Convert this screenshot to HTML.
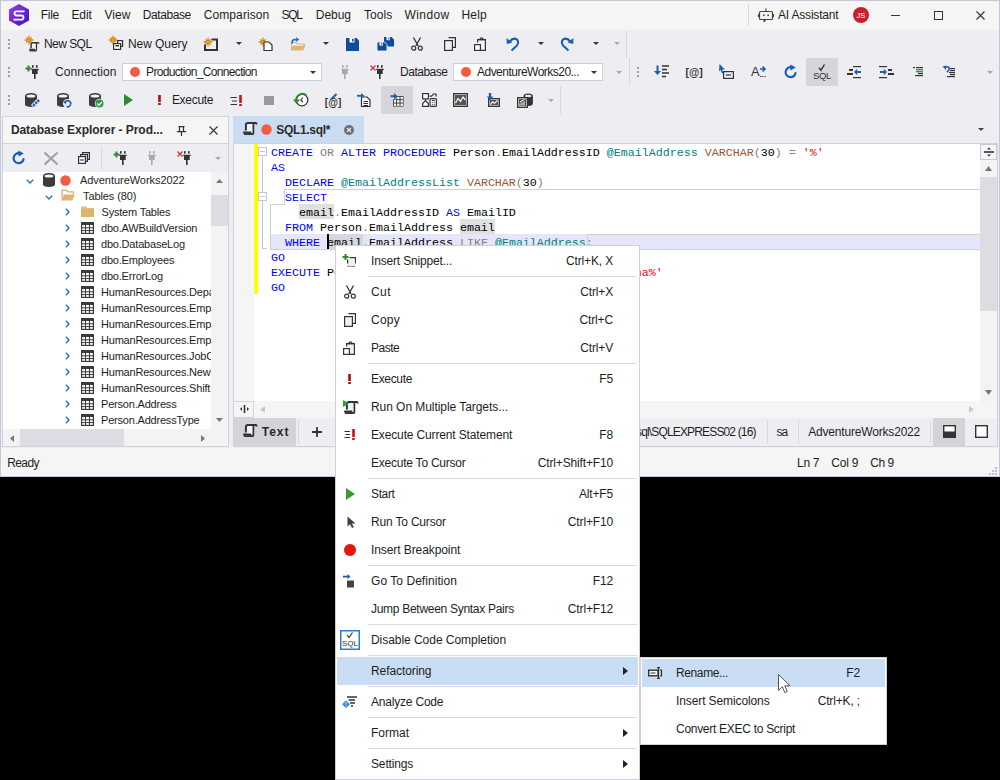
<!DOCTYPE html>
<html><head><meta charset="utf-8"><style>
*{margin:0;padding:0;box-sizing:border-box}
html,body{width:1000px;height:780px;overflow:hidden;background:#000}
body{position:relative;font-family:"Liberation Sans",sans-serif;font-size:12px;color:#1e1e1e}
.a{position:absolute}
.t{position:absolute;white-space:nowrap;font-size:12px;line-height:14px;color:#1e1e1e;letter-spacing:-0.15px}
.b{font-weight:bold;color:#2a2a2a}
svg{position:absolute;overflow:visible}
.code{position:absolute;white-space:pre;font-family:"Liberation Mono",monospace;font-size:11.667px;line-height:15px;color:#000}
.kw{color:#0000ff}.gr{color:#808080}.tl{color:#008080}.br{color:#a0522d}.rd{color:#ff0000}
</style></head><body>
<div class="a" style="left:0px;top:0px;width:1000px;height:477px;background:#eeeef2;"></div>
<div class="a" style="left:0px;top:0px;width:1000px;height:1px;background:#c6c6d8;"></div>
<div class="a" style="left:0px;top:0px;width:1px;height:477px;background:#c6c6d8;"></div>
<div class="a" style="left:999px;top:0px;width:1px;height:477px;background:#c6c6d8;"></div>
<div class="a" style="left:1px;top:1px;width:998px;height:29px;background:#f5f5f5;"></div>
<div class="a" style="left:1px;top:448px;width:998px;height:28px;background:#f5f5f5;"></div>
<div class="a" style="left:0px;top:476px;width:1000px;height:1px;background:#c6c6d8;"></div>
<svg style="left:9px;top:4px" width="20" height="22" viewBox="0 0 20 22"><defs><linearGradient id="lg" x1="0" y1="0" x2="1" y2="1"><stop offset="0" stop-color="#9b3fe0"/><stop offset="1" stop-color="#3a10c0"/></linearGradient></defs><path d="M10 0 L20 5.5 L20 16.5 L10 22 L0 16.5 L0 5.5Z" fill="url(#lg)"/><path d="M15.5 7.3 H7.6 a2.1 2.1 0 0 0 0 4.2 H12.4 a2.1 2.1 0 0 1 0 4.2 H4.5" fill="none" stroke="#fff" stroke-width="1.8"/></svg>
<div class="t " style="left:40.75px;top:8px;letter-spacing:-0.279px;">File</div>
<div class="t " style="left:71.5px;top:8px;letter-spacing:-0.143px;">Edit</div>
<div class="t " style="left:104.5px;top:8px;letter-spacing:0.069px;">View</div>
<div class="t " style="left:142.75px;top:8px;letter-spacing:-0.41px;">Database</div>
<div class="t " style="left:203.75px;top:8px;letter-spacing:0.09px;">Comparison</div>
<div class="t " style="left:281.5px;top:8px;letter-spacing:-1.256px;">SQL</div>
<div class="t " style="left:315.75px;top:8px;letter-spacing:-0.028px;">Debug</div>
<div class="t " style="left:364.0px;top:8px;letter-spacing:0.059px;">Tools</div>
<div class="t " style="left:404.5px;top:8px;letter-spacing:0.414px;">Window</div>
<div class="t " style="left:461.5px;top:8px;letter-spacing:0.19px;">Help</div>
<div class="a" style="left:748px;top:4px;width:1px;height:22px;background:#d8d8e0;"></div>
<svg style="left:758px;top:8px" width="16" height="14" viewBox="0 0 16 14"><rect x="1.5" y="3.5" width="13" height="8" rx="1" fill="none" stroke="#444" stroke-width="1.2"/><path d="M8 0.5v3 M0.5 6v3 M15.5 6v3" stroke="#444" stroke-width="1.2"/><rect x="5" y="6.5" width="1.6" height="1.6" fill="#444"/><rect x="9.4" y="6.5" width="1.6" height="1.6" fill="#444"/><path d="M6 11.5v2.5l2-2.5" fill="#444" stroke="#444"/></svg>
<div class="t " style="left:778.0px;top:8px;letter-spacing:-0.187px;">AI Assistant</div>
<svg style="left:853px;top:7px" width="16" height="16" viewBox="0 0 16 16"><circle cx="8" cy="8" r="8" fill="#c8202a"/><text x="8" y="11" font-family="Liberation Sans" font-size="7.5" fill="#fff" text-anchor="middle">JS</text></svg>
<div class="a" style="left:891px;top:15px;width:9px;height:1px;background:#333;"></div>
<div class="a" style="left:934px;top:11px;width:9px;height:9px;background:transparent;border:1px solid #333"></div>
<svg style="left:976px;top:11px" width="9" height="9" viewBox="0 0 9 9"><path d="M0.5 0.5 L8.5 8.5 M8.5 0.5 L0.5 8.5" stroke="#333" stroke-width="1.1"/></svg>
<div class="a" style="left:8px;top:39px;width:2px;height:2px;background:#a0a0aa;"></div>
<div class="a" style="left:8px;top:43px;width:2px;height:2px;background:#a0a0aa;"></div>
<div class="a" style="left:8px;top:47px;width:2px;height:2px;background:#a0a0aa;"></div>
<div class="a" style="left:8px;top:67px;width:2px;height:2px;background:#a0a0aa;"></div>
<div class="a" style="left:8px;top:71px;width:2px;height:2px;background:#a0a0aa;"></div>
<div class="a" style="left:8px;top:75px;width:2px;height:2px;background:#a0a0aa;"></div>
<div class="a" style="left:8px;top:95px;width:2px;height:2px;background:#a0a0aa;"></div>
<div class="a" style="left:8px;top:99px;width:2px;height:2px;background:#a0a0aa;"></div>
<div class="a" style="left:8px;top:103px;width:2px;height:2px;background:#a0a0aa;"></div>
<div class="a" style="left:637px;top:67px;width:2px;height:2px;background:#a0a0aa;"></div>
<div class="a" style="left:637px;top:71px;width:2px;height:2px;background:#a0a0aa;"></div>
<div class="a" style="left:637px;top:75px;width:2px;height:2px;background:#a0a0aa;"></div>
<div class="t " style="left:43.9px;top:37px;letter-spacing:-0.525px;">New SQL</div>
<div class="t " style="left:127.9px;top:37px;letter-spacing:-0.052px;">New Query</div>
<svg style="left:236px;top:42px" width="6" height="3" viewBox="0 0 6 3"><path d="M0 0H6L3 3Z" fill="#333"/></svg>
<svg style="left:323px;top:42px" width="6" height="3" viewBox="0 0 6 3"><path d="M0 0H6L3 3Z" fill="#333"/></svg>
<svg style="left:538px;top:42px" width="6" height="3" viewBox="0 0 6 3"><path d="M0 0H6L3 3Z" fill="#333"/></svg>
<svg style="left:593px;top:42px" width="6" height="3" viewBox="0 0 6 3"><path d="M0 0H6L3 3Z" fill="#333"/></svg>
<svg style="left:614px;top:42px" width="6" height="3" viewBox="0 0 6 3"><path d="M0 0H6L3 3Z" fill="#a8a8b0"/></svg>
<div class="a" style="left:626px;top:30px;width:1px;height:28px;background:#d8d8e0;"></div>
<div class="t " style="left:55.1px;top:65px;letter-spacing:0.077px;">Connection</div>
<div class="a" style="left:122px;top:63px;width:200px;height:18px;background:#fff;border:1px solid #cccfdb"></div>
<svg style="left:130px;top:67px" width="10" height="10" viewBox="0 0 10 10"><circle cx="5" cy="5" r="5" fill="#f25a42"/></svg>
<div class="t " style="left:146.1px;top:65px;letter-spacing:-0.668px;">Production_Connection</div>
<svg style="left:310px;top:71px" width="6" height="3" viewBox="0 0 6 3"><path d="M0 0H6L3 3Z" fill="#333"/></svg>
<div class="t " style="left:400.0px;top:65px;letter-spacing:-0.481px;">Database</div>
<div class="a" style="left:453px;top:63px;width:150px;height:18px;background:#fff;border:1px solid #cccfdb"></div>
<svg style="left:461px;top:67px" width="10" height="10" viewBox="0 0 10 10"><circle cx="5" cy="5" r="5" fill="#f25a42"/></svg>
<div class="t " style="left:477.0px;top:65px;letter-spacing:-0.518px;">AdventureWorks20...</div>
<svg style="left:591px;top:71px" width="6" height="3" viewBox="0 0 6 3"><path d="M0 0H6L3 3Z" fill="#333"/></svg>
<svg style="left:616px;top:71px" width="6" height="3" viewBox="0 0 6 3"><path d="M0 0H6L3 3Z" fill="#a8a8b0"/></svg>
<div class="a" style="left:629px;top:58px;width:1px;height:28px;background:#d8d8e0;"></div>
<div class="a" style="left:806px;top:58px;width:32px;height:28px;background:#d6d6da;"></div>
<svg style="left:987px;top:71px" width="6" height="3" viewBox="0 0 6 3"><path d="M0 0H6L3 3Z" fill="#a8a8b0"/></svg>
<div class="t " style="left:171.9px;top:93px;letter-spacing:-0.293px;">Execute</div>
<div class="a" style="left:381px;top:86px;width:32px;height:28px;background:#d6d6da;"></div>
<svg style="left:548px;top:99px" width="6" height="3" viewBox="0 0 6 3"><path d="M0 0H6L3 3Z" fill="#a8a8b0"/></svg>
<div class="a" style="left:560px;top:86px;width:1px;height:28px;background:#d8d8e0;"></div>
<div class="a" style="left:2px;top:116px;width:227px;height:331px;background:#d0d2de;"></div>
<div class="a" style="left:3px;top:117px;width:225px;height:26px;background:#f5f5f5;"></div>
<div class="a" style="left:3px;top:144px;width:225px;height:28px;background:#eeeef2;"></div>
<div class="a" style="left:3px;top:172px;width:225px;height:274px;background:#fff;"></div>
<div class="t b" style="left:10.9px;top:123px;letter-spacing:-0.057px;">Database Explorer - Prod...</div>
<div class="a" style="left:101px;top:146px;width:1px;height:24px;background:#d8d8e0;"></div>
<svg style="left:215px;top:157px" width="6" height="3" viewBox="0 0 6 3"><path d="M0 0H6L3 3Z" fill="#a8a8b0"/></svg>
<div class="a" style="left:211px;top:172px;width:17px;height:257px;background:#f3f3f3;"></div>
<div class="a" style="left:211px;top:195px;width:17px;height:31px;background:#dcdce2;"></div>
<div class="a" style="left:3px;top:429px;width:208px;height:17px;background:#f3f3f3;"></div>
<div class="a" style="left:20px;top:429px;width:104px;height:17px;background:#dcdce2;"></div>
<div class="a" style="left:211px;top:429px;width:17px;height:17px;background:#f3f3f3;"></div>
<div class="t " style="left:80px;top:173px;letter-spacing:-0.05px;font-size:11px;">AdventureWorks2022</div>
<div class="t " style="left:83px;top:189px;letter-spacing:-0.1px;font-size:11px;">Tables (80)</div>
<div class="t " style="left:101.5px;top:205px;letter-spacing:-0.2px;font-size:11px;">System Tables</div>
<div class="t" style="left:101px;top:221px;width:110px;overflow:hidden;letter-spacing:-0.2px;font-size:11px">dbo.AWBuildVersion</div>
<div class="t" style="left:101px;top:237px;width:110px;overflow:hidden;letter-spacing:-0.2px;font-size:11px">dbo.DatabaseLog</div>
<div class="t" style="left:101px;top:253px;width:110px;overflow:hidden;letter-spacing:-0.2px;font-size:11px">dbo.Employees</div>
<div class="t" style="left:101px;top:269px;width:110px;overflow:hidden;letter-spacing:-0.2px;font-size:11px">dbo.ErrorLog</div>
<div class="t" style="left:101px;top:285px;width:110px;overflow:hidden;letter-spacing:-0.2px;font-size:11px">HumanResources.Department</div>
<div class="t" style="left:101px;top:301px;width:110px;overflow:hidden;letter-spacing:-0.2px;font-size:11px">HumanResources.Employee</div>
<div class="t" style="left:101px;top:317px;width:110px;overflow:hidden;letter-spacing:-0.2px;font-size:11px">HumanResources.EmployeeDepartmentHistory</div>
<div class="t" style="left:101px;top:333px;width:110px;overflow:hidden;letter-spacing:-0.2px;font-size:11px">HumanResources.EmployeePayHistory</div>
<div class="t" style="left:101px;top:349px;width:110px;overflow:hidden;letter-spacing:-0.2px;font-size:11px">HumanResources.JobCandidate</div>
<div class="t" style="left:101px;top:365px;width:110px;overflow:hidden;letter-spacing:-0.2px;font-size:11px">HumanResources.NewHire</div>
<div class="t" style="left:101px;top:381px;width:110px;overflow:hidden;letter-spacing:-0.2px;font-size:11px">HumanResources.Shift</div>
<div class="t" style="left:101px;top:397px;width:110px;overflow:hidden;letter-spacing:-0.2px;font-size:11px">Person.Address</div>
<div class="t" style="left:101px;top:413px;width:110px;overflow:hidden;letter-spacing:-0.2px;font-size:11px">Person.AddressType</div>
<div class="a" style="left:233px;top:116px;width:131px;height:28px;background:#c9dcf2;"></div>
<div class="t b" style="left:276.2px;top:123px;letter-spacing:-0.298px;">SQL1.sql*</div>
<div class="a" style="left:233px;top:143px;width:765px;height:304px;background:#d0d2de;"></div>
<div class="a" style="left:234px;top:144px;width:763px;height:257px;background:#fff;"></div>
<div class="a" style="left:234px;top:144px;width:20px;height:257px;background:#f5f5f5;"></div>
<div class="a" style="left:254px;top:144px;width:4px;height:150px;background:#ffff00;"></div>
<div class="a" style="left:980px;top:144px;width:17px;height:257px;background:#f3f3f3;"></div>
<div class="a" style="left:980px;top:177px;width:17px;height:134px;background:#dcdce2;"></div>
<div class="a" style="left:980px;top:144px;width:17px;height:16px;background:#f5f5f5;border:1px solid #c8cad8"></div>
<div class="a" style="left:234px;top:401px;width:763px;height:17px;background:#f5f5f5;"></div>
<div class="a" style="left:234px;top:401px;width:20px;height:17px;background:#f5f5f5;border:1px solid #d0d2de;border-left:none"></div>
<div class="a" style="left:234px;top:418px;width:763px;height:28px;background:#eeeef2;"></div>
<div class="a" style="left:234px;top:418px;width:62px;height:28px;background:#d4d4d8;"></div>
<div class="t b" style="left:261.7px;top:425px;letter-spacing:1.006px;">Text</div>
<div class="a" style="left:298px;top:420px;width:1px;height:24px;background:#d8d8e0;"></div>
<div class="t " style="left:636.0px;top:425px;letter-spacing:-0.845px;">sql\SQLEXPRESS02 (16)</div>
<div class="a" style="left:767px;top:420px;width:1px;height:24px;background:#d8d8e0;"></div>
<div class="t " style="left:776.5px;top:425px;letter-spacing:-1.074px;">sa</div>
<div class="a" style="left:798px;top:420px;width:1px;height:24px;background:#d8d8e0;"></div>
<div class="t " style="left:808.2px;top:425px;letter-spacing:-0.181px;">AdventureWorks2022</div>
<div class="a" style="left:930px;top:420px;width:1px;height:24px;background:#d8d8e0;"></div>
<div class="a" style="left:933px;top:418px;width:32px;height:28px;background:#d4d4d8;"></div>
<div class="t " style="left:7.2px;top:456px;letter-spacing:-0.597px;">Ready</div>
<div class="t " style="left:797.1px;top:456px;letter-spacing:-0.318px;">Ln 7</div>
<div class="t " style="left:831.3px;top:456px;letter-spacing:-0.203px;">Col 9</div>
<div class="t " style="left:870.3px;top:456px;letter-spacing:-0.516px;">Ch 9</div>
<svg style="left:25px;top:36px" width="8" height="8" viewBox="0 0 8 8"><path d="M5.60 4.00L7.90 4.00M5.13 5.13L6.26 6.26M4.00 5.60L4.00 7.90M2.87 5.13L1.74 6.26M2.40 4.00L0.10 4.00M2.87 2.87L1.74 1.74M4.00 2.40L4.00 0.10M5.13 2.87L6.26 1.74" stroke="#d4860b" stroke-width="1.3" stroke-linecap="round"/><circle cx="4" cy="4" r="1.3" fill="none" stroke="#d4860b" stroke-width="1"/></svg>
<svg style="left:29px;top:42px" width="10.08" height="9.36" viewBox="0 0 14 13"><rect x="3.5" y="2" width="6.5" height="8.5" fill="#f2f2f2"/><path d="M2.9 8.6V3.2Q2.9 1.1 5 1.1H12.8Q13.6 1.1 13.6 2.4" stroke="#333333" stroke-width="2" fill="none"/><path d="M10.4 1.5V11.2Q10.4 12.2 9.4 12.2H1" stroke="#333333" stroke-width="1.7" fill="none"/><path d="M0.2 10.6H7.2Q7.6 11.6 8.5 11.8" stroke="#333333" stroke-width="2.2" fill="none"/></svg>
<svg style="left:109px;top:36px" width="8" height="8" viewBox="0 0 8 8"><path d="M5.60 4.00L7.90 4.00M5.13 5.13L6.26 6.26M4.00 5.60L4.00 7.90M2.87 5.13L1.74 6.26M2.40 4.00L0.10 4.00M2.87 2.87L1.74 1.74M4.00 2.40L4.00 0.10M5.13 2.87L6.26 1.74" stroke="#d4860b" stroke-width="1.3" stroke-linecap="round"/><circle cx="4" cy="4" r="1.3" fill="none" stroke="#d4860b" stroke-width="1"/></svg>
<svg style="left:113px;top:40px" width="10" height="10" viewBox="0 0 10 10"><rect x="4.6" y="0.6" width="5" height="5.8" fill="none" stroke="#333333" stroke-width="1.2"/><rect x="0.6" y="3.6" width="7" height="5.8" fill="#fff" stroke="#333333" stroke-width="1.2"/><rect x="2.5" y="5" width="3.5" height="1.5" fill="#333333"/></svg>
<svg style="left:204px;top:38px" width="8" height="8" viewBox="0 0 8 8"><path d="M5.60 4.00L7.90 4.00M5.13 5.13L6.26 6.26M4.00 5.60L4.00 7.90M2.87 5.13L1.74 6.26M2.40 4.00L0.10 4.00M2.87 2.87L1.74 1.74M4.00 2.40L4.00 0.10M5.13 2.87L6.26 1.74" stroke="#d4860b" stroke-width="1.3" stroke-linecap="round"/><circle cx="4" cy="4" r="1.3" fill="none" stroke="#d4860b" stroke-width="1"/></svg>
<svg style="left:204px;top:38px" width="14" height="13" viewBox="0 0 14 13"><path d="M7.5 1.5H13V12H1V6.5" stroke="#333333" stroke-width="2" fill="none"/></svg>
<svg style="left:259px;top:38px" width="8" height="8" viewBox="0 0 8 8"><path d="M5.60 4.00L7.90 4.00M5.13 5.13L6.26 6.26M4.00 5.60L4.00 7.90M2.87 5.13L1.74 6.26M2.40 4.00L0.10 4.00M2.87 2.87L1.74 1.74M4.00 2.40L4.00 0.10M5.13 2.87L6.26 1.74" stroke="#d4860b" stroke-width="1.3" stroke-linecap="round"/><circle cx="4" cy="4" r="1.3" fill="none" stroke="#d4860b" stroke-width="1"/></svg>
<svg style="left:263px;top:41px" width="10" height="10" viewBox="0 0 10 10"><path d="M1 1H6L9 4V9.5H1Z" fill="#fff" stroke="#333333" stroke-width="1.2"/></svg>
<svg style="left:290px;top:37px" width="16" height="14" viewBox="0 0 16 14"><path d="M1.6 13V5.6H5.8L7.2 7H14.2V9" fill="#fff" stroke="#d6b274" stroke-width="1.2"/><path d="M0.5 13.5L2.8 8.5H15.5L13.2 13.5Z" fill="#dcb676"/><path d="M2.2 6.5Q1.6 2.6 5 2.6H6.5" stroke="#1a6ad0" stroke-width="1.6" fill="none"/><path d="M6.2 0.2L9.2 2.6L6.2 5Z" fill="#1a6ad0"/></svg>
<svg style="left:346px;top:38px" width="13" height="13" viewBox="0 0 13 13"><path d="M0 0H10.5L13 2.5V13H0Z" fill="#0e4c9a"/><rect x="3.5" y="0" width="5" height="4.5" fill="#fff"/><rect x="6" y="0.8" width="1.6" height="2.6" fill="#0e4c9a"/></svg>
<svg style="left:377px;top:37px" width="17" height="14" viewBox="0 0 17 14"><path d="M7 0H14.5L17 2.5V9.5H7Z" fill="#0e4c9a"/><rect x="9.5" y="0" width="3.5" height="3.2" fill="#fff"/><rect x="11.3" y="0.6" width="1" height="2" fill="#0e4c9a"/><path d="M0 5H7.5L10 7.5V14H0Z" fill="#0e4c9a" stroke="#eeeef2" stroke-width="0.9"/><rect x="2.5" y="5.4" width="3.5" height="3.2" fill="#fff"/><rect x="4.3" y="6" width="1" height="2" fill="#0e4c9a"/></svg>
<svg style="left:411px;top:37px" width="12" height="14" viewBox="0 0 12 14"><path d="M2.5 0.5L7.2 9M9.5 0.5L4.8 9" stroke="#333333" stroke-width="1.3" fill="none"/><circle cx="2.7" cy="11.2" r="2" fill="none" stroke="#333333" stroke-width="1.2"/><circle cx="9.3" cy="11.2" r="2" fill="none" stroke="#333333" stroke-width="1.2"/></svg>
<svg style="left:444px;top:37px" width="12" height="14" viewBox="0 0 12 14"><path d="M4.5 0.6H11.4V10.4H9" stroke="#333333" stroke-width="1.2" fill="none"/><rect x="0.6" y="3.6" width="7.8" height="9.8" fill="#f0f0f0" stroke="#333333" stroke-width="1.2"/></svg>
<svg style="left:474px;top:37px" width="13" height="14" viewBox="0 0 13 14"><path d="M3.6 5.5V2.6H11.4V13.4H7" stroke="#333333" stroke-width="1.2" fill="#f0f0f0"/><path d="M5.5 2.6 Q7.5 -0.8 9.5 2.6Z" fill="none" stroke="#333333" stroke-width="1.1"/><rect x="0.6" y="7.6" width="5.8" height="5.8" fill="#fff" stroke="#333333" stroke-width="1.2"/></svg>
<svg style="left:505px;top:36px" width="15" height="15" viewBox="0 0 15 15"><path d="M4.5 5.5Q8.5 1 12 3.5Q14.5 6.5 11.5 10L6.5 14.5" stroke="#1a5fb4" stroke-width="2" fill="none"/><path d="M1.5 2L1.8 8L7.5 6.5Z" fill="#1a5fb4"/></svg>
<svg style="left:560px;top:36px" width="15" height="15" viewBox="0 0 15 15"><g transform="translate(15 0) scale(-1 1)"><path d="M4.5 5.5Q8.5 1 12 3.5Q14.5 6.5 11.5 10L6.5 14.5" stroke="#1a5fb4" stroke-width="2" fill="none"/><path d="M1.5 2L1.8 8L7.5 6.5Z" fill="#1a5fb4"/></g></svg>
<svg style="left:25px;top:65px" width="7" height="7" viewBox="0 0 7 7"><path d="M3.5 0.5V6.5M0.5 3.5H6.5" stroke="#2e8b2e" stroke-width="2"/></svg>
<svg style="left:31px;top:65px" width="8" height="14" viewBox="0 0 8 14"><rect x="1" y="0" width="1.6" height="2.8" rx="0.6" fill="#333333"/><rect x="5" y="0" width="1.6" height="2.8" rx="0.6" fill="#333333"/><rect x="0.2" y="3.8" width="7.6" height="1.2" fill="#333333"/><rect x="1" y="4.8" width="5.7" height="4.2" fill="#333333"/><rect x="3" y="8.8" width="1.6" height="5.2" fill="#333333"/></svg>
<svg style="left:341px;top:65px" width="8" height="14" viewBox="0 0 8 14"><rect x="1" y="0" width="1.6" height="2.8" rx="0.6" fill="#a8a8ae"/><rect x="5" y="0" width="1.6" height="2.8" rx="0.6" fill="#a8a8ae"/><rect x="0.2" y="3.8" width="7.6" height="1.2" fill="#a8a8ae"/><rect x="1" y="4.8" width="5.7" height="4.2" fill="#a8a8ae"/><rect x="3" y="8.8" width="1.6" height="5.2" fill="#a8a8ae"/></svg>
<svg style="left:370px;top:65px" width="6" height="6" viewBox="0 0 6 6"><path d="M0.5 0.5L5.5 5.5M5.5 0.5L0.5 5.5" stroke="#c83232" stroke-width="1.2"/></svg>
<svg style="left:376px;top:65px" width="8" height="14" viewBox="0 0 8 14"><rect x="1" y="0" width="1.6" height="2.8" rx="0.6" fill="#333333"/><rect x="5" y="0" width="1.6" height="2.8" rx="0.6" fill="#333333"/><rect x="0.2" y="3.8" width="7.6" height="1.2" fill="#333333"/><rect x="1" y="4.8" width="5.7" height="4.2" fill="#333333"/><rect x="3" y="8.8" width="1.6" height="5.2" fill="#333333"/></svg>
<svg style="left:654px;top:65px" width="15" height="13" viewBox="0 0 15 13"><path d="M8 1H15M8 4.5H13M8 8H15M8 11.5H12" stroke="#333333" stroke-width="1.6"/><path d="M3.5 0.5V7" stroke="#1a5fb4" stroke-width="2"/><path d="M0 6H7L3.5 10Z" fill="#1a5fb4"/></svg>
<svg style="left:686px;top:65px" width="16" height="13" viewBox="0 0 16 13"><text x="8" y="11" font-family="Liberation Sans" font-size="10.5" font-weight="bold" fill="#333333" text-anchor="middle">[@]</text></svg>
<svg style="left:719px;top:64px" width="15" height="15" viewBox="0 0 15 15"><path d="M0.5 0L6 5.5H3L4.5 9L3 9.5L1.5 6L0 7.5Z" fill="#1a5fb4"/><rect x="4.6" y="7.6" width="9.8" height="6.8" fill="none" stroke="#333333" stroke-width="1.2"/><path d="M7 11H12" stroke="#333333" stroke-width="1.2"/></svg>
<svg style="left:751px;top:65px" width="15" height="13" viewBox="0 0 15 13"><text x="0" y="11" font-family="Liberation Sans" font-size="13" fill="#333333">A</text><path d="M9 4H14M11.5 1.5L14 4L11.5 6.5" stroke="#1a5fb4" stroke-width="1.6" fill="none"/><path d="M9 11.5h1.2M11.2 11.5h1.2M13.4 11.5h1.2" stroke="#333333" stroke-width="1.2"/></svg>
<svg style="left:784px;top:65px" width="14" height="14" viewBox="0 0 14 14"><path d="M11.6 7.2 A5 5 0 1 1 7.6 2.3" stroke="#1a5fb4" stroke-width="2.2" fill="none"/><path d="M6.4 -0.6L11.8 2.5L6.4 5.6Z" fill="#1a5fb4"/></svg>
<svg style="left:814px;top:64px" width="16" height="15" viewBox="0 0 16 15"><path d="M5 3.8L7 6.2L10.5 0.5" stroke="#333333" stroke-width="1.4" fill="none"/><text x="8" y="14.8" font-family="Liberation Sans" font-size="9.5" fill="#333333" text-anchor="middle" letter-spacing="-0.3">SQL</text></svg>
<svg style="left:847px;top:65px" width="15" height="14" viewBox="0 0 15 14"><rect x="6" y="1" width="8" height="1.2" fill="#333333"/><rect x="2" y="4" width="4" height="2" fill="#333333"/><rect x="0" y="8" width="6" height="2" fill="#333333"/><rect x="6" y="12" width="8" height="1.2" fill="#333333"/><path d="M7 7L10.2 3.8V6H14V8H10.2V10.2Z" fill="#1a5fb4"/></svg>
<svg style="left:879px;top:65px" width="15" height="14" viewBox="0 0 15 14"><rect x="0" y="1" width="8" height="1.2" fill="#333333"/><rect x="9" y="4" width="4" height="2" fill="#333333"/><rect x="9" y="8" width="6" height="2" fill="#333333"/><rect x="0" y="12" width="8" height="1.2" fill="#333333"/><path d="M8 7L4.8 3.8V6H1V8H4.8V10.2Z" fill="#1a5fb4"/></svg>
<svg style="left:913px;top:66px" width="11" height="11" viewBox="0 0 11 11"><rect x="0" y="1" width="2" height="1.2" fill="#333333"/><rect x="3" y="1" width="7" height="1.2" fill="#333333"/><rect x="3" y="3" width="7" height="1.4" fill="#3a9a3a"/><rect x="3" y="5" width="7" height="1.4" fill="#3a9a3a"/><rect x="5" y="7" width="5" height="1.2" fill="#333333"/><rect x="2" y="9" width="8" height="1.2" fill="#333333"/></svg>
<svg style="left:942px;top:65px" width="14" height="13" viewBox="0 0 14 13"><path d="M3 2.5Q7.5 0.5 7.2 4.2Q6.8 6 4.8 7" stroke="#1a5fb4" stroke-width="1.6" fill="none"/><path d="M0.5 1.5L4 0.5V5Z" fill="#1a5fb4"/><rect x="8" y="3" width="5" height="1.2" fill="#333333"/><rect x="8" y="5" width="5" height="1.2" fill="#333333"/><rect x="7" y="7" width="6" height="1.2" fill="#333333"/><rect x="8" y="9" width="5" height="1.2" fill="#333333"/><rect x="5" y="11" width="8" height="1.2" fill="#333333"/></svg>
<svg style="left:25px;top:93px" width="12" height="14" viewBox="0 0 12 14"><path d="M0 2.8 A6.0 2.8 0 0 1 12 2.8 V11.5 A6.0 2.5 0 0 1 0 11.5Z" fill="#3c3c3c"/><ellipse cx="6.0" cy="2.9" rx="4.4" ry="1.5" fill="#f4f4f4"/></svg>
<svg style="left:31px;top:99px" width="9" height="9" viewBox="0 0 9 9"><path d="M8 1L1.5 7.5" stroke="#eeeef2" stroke-width="4.5"/><path d="M8 1L1.5 7.5" stroke="#1a5fb4" stroke-width="2.6" stroke-dasharray="2.2 0.8"/></svg>
<svg style="left:57px;top:93px" width="12" height="14" viewBox="0 0 12 14"><path d="M0 2.8 A6.0 2.8 0 0 1 12 2.8 V11.5 A6.0 2.5 0 0 1 0 11.5Z" fill="#3c3c3c"/><ellipse cx="6.0" cy="2.9" rx="4.4" ry="1.5" fill="#f4f4f4"/></svg>
<svg style="left:63px;top:99px" width="9" height="9" viewBox="0 0 9 9"><circle cx="4.5" cy="4.5" r="4.5" fill="#eeeef2"/><path d="M2 3.5 A3 3 0 1 1 3.5 7.5" stroke="#1a5fb4" stroke-width="1.5" fill="none"/><path d="M0 2L3.6 2.2L2.5 5.5Z" fill="#1a5fb4"/></svg>
<svg style="left:89px;top:93px" width="12" height="14" viewBox="0 0 12 14"><path d="M0 2.8 A6.0 2.8 0 0 1 12 2.8 V11.5 A6.0 2.5 0 0 1 0 11.5Z" fill="#3c3c3c"/><ellipse cx="6.0" cy="2.9" rx="4.4" ry="1.5" fill="#f4f4f4"/></svg>
<svg style="left:95px;top:99px" width="9" height="9" viewBox="0 0 9 9"><circle cx="4.5" cy="4.5" r="4.7" fill="#eeeef2"/><circle cx="4.5" cy="4.5" r="4" fill="#2e9a3e"/><path d="M2.3 4.5L4 6.2L6.8 3" stroke="#fff" stroke-width="1.3" fill="none"/></svg>
<svg style="left:124px;top:94px" width="9" height="12" viewBox="0 0 9 12"><path d="M0 0L9 6L0 12Z" fill="#2e8b2e"/></svg>
<svg style="left:158px;top:95px" width="3" height="10" viewBox="0 0 3 10"><rect x="0.2" y="0" width="2.6" height="7" fill="#a01010"/><rect x="0.2" y="8" width="2.6" height="2" fill="#a01010"/></svg>
<svg style="left:230px;top:96px" width="13" height="10" viewBox="0 0 13 10"><path d="M0.5 1.5H7M2 5H7M0.5 8.5H7" stroke="#333333" stroke-width="1"/></svg>
<svg style="left:239px;top:95px" width="3" height="11" viewBox="0 0 3 11"><rect x="0.2" y="0" width="2.6" height="8" fill="#c01818"/><rect x="0.2" y="9" width="2.6" height="2" fill="#c01818"/></svg>
<div class="a" style="left:264px;top:96px;width:10px;height:9px;background:#9a9a9a;"></div>
<svg style="left:293px;top:93px" width="16" height="14" viewBox="0 0 16 14"><circle cx="9" cy="7" r="5.8" fill="#fff" stroke="#333333" stroke-width="1.2"/><path d="M10 4.5L7.8 7L10 9" stroke="#333333" stroke-width="1.1" fill="none"/><path d="M3.5 8 A6 6 0 0 1 13.5 2.5" stroke="#2e8b2e" stroke-width="2" fill="none"/><path d="M0 6.5H7L3.5 11Z" fill="#2e8b2e"/></svg>
<svg style="left:325px;top:93px" width="16" height="14" viewBox="0 0 16 14"><path d="M6 6.5L11.5 1" stroke="#1a5fb4" stroke-width="2.2"/><text x="8" y="13" font-family="Liberation Sans" font-size="10" font-weight="bold" fill="#333333" text-anchor="middle">[@]</text></svg>
<svg style="left:357px;top:93px" width="14" height="14" viewBox="0 0 14 14"><path d="M4.5 4H10L13 7V13.5H4.5Z" fill="#fff" stroke="#333333" stroke-width="1.2"/><path d="M6.5 8.5H11M6.5 10.5H11M6.5 12.5H11" stroke="#333333" stroke-width="1"/><path d="M0 2.8H5" stroke="#1a5fb4" stroke-width="1.8"/><path d="M4 0L7.5 2.8L4 5.6Z" fill="#1a5fb4"/></svg>
<svg style="left:390px;top:93px" width="14" height="14" viewBox="0 0 14 14"><path d="M6.5 3H13.5V13.5H3V6.5H6.5Z" fill="#333333"/><rect x="3.80" y="7.15" width="2.4" height="2.4" fill="#fff"/><rect x="3.80" y="10.50" width="2.4" height="2.4" fill="#fff"/><rect x="7.15" y="3.80" width="2.4" height="2.4" fill="#fff"/><rect x="7.15" y="7.15" width="2.4" height="2.4" fill="#fff"/><rect x="7.15" y="10.50" width="2.4" height="2.4" fill="#fff"/><rect x="10.50" y="3.80" width="2.4" height="2.4" fill="#fff"/><rect x="10.50" y="7.15" width="2.4" height="2.4" fill="#fff"/><rect x="10.50" y="10.50" width="2.4" height="2.4" fill="#fff"/><path d="M0.5 3.2H5" stroke="#1a5fb4" stroke-width="2"/><path d="M4 0L7.5 3.2L4 6.4Z" fill="#1a5fb4"/></svg>
<svg style="left:421px;top:93px" width="16" height="14" viewBox="0 0 16 14"><rect x="1.6" y="0.6" width="5.8" height="5.3" fill="#fff" stroke="#333333" stroke-width="1.2"/><path d="M8.5 3.2H10.5L12.5 1H15V3.5" stroke="#333333" stroke-width="1.2" fill="none"/><path d="M4.5 6V7.5M1.6 13.4V10.5L4.5 7.5L7.4 10.5V13.4Z" fill="#fff" stroke="#333333" stroke-width="1.2"/><rect x="9.1" y="5.6" width="6.3" height="7.8" rx="1" fill="#fff" stroke="#333333" stroke-width="1.2"/><path d="M10.8 7.5H13.8" stroke="#333333" stroke-width="1"/><path d="M10.8 9.6h1M12.8 9.6h1M10.8 11.6h1M12.8 11.6h1" stroke="#333333" stroke-width="1"/></svg>
<svg style="left:453px;top:93px" width="15" height="14" viewBox="0 0 15 14"><rect x="0.7" y="0.7" width="13.6" height="12.6" fill="#fff" stroke="#333333" stroke-width="1.4"/><rect x="2" y="2" width="11" height="10" fill="#555"/><path d="M2.5 10L5 5.5L7.5 8.5L10 4L12.5 7" stroke="#fff" stroke-width="1.2" fill="none"/></svg>
<svg style="left:485px;top:93px" width="15" height="14" viewBox="0 0 15 14"><rect x="3.7" y="5.7" width="10.6" height="7.6" fill="#fff" stroke="#333333" stroke-width="1.4"/><rect x="5" y="7" width="8" height="5" fill="#555"/><path d="M5.5 11.5L7.5 8.8L9.5 10.3L12.5 7.5" stroke="#fff" stroke-width="1.1" fill="none"/><path d="M5 0V4.5" stroke="#1a5fb4" stroke-width="2.4"/><path d="M1.8 3.5H8.2L5 7.5Z" fill="#1a5fb4"/></svg>
<svg style="left:517px;top:93px" width="16" height="14" viewBox="0 0 16 14"><path d="M6.5 3 A4.7 2.5 0 0 1 15.9 3 V10.5 A4.7 2.5 0 0 1 6.5 10.5Z" fill="#333333"/><ellipse cx="11.2" cy="3" rx="3.2" ry="1.2" fill="#e8e8e8"/><rect x="0.7" y="4.7" width="9.6" height="9.6" fill="#fff" stroke="#333333" stroke-width="1.4"/><rect x="2" y="6" width="7" height="7" fill="#555"/><path d="M3 12.5V10.5M5 12.5V9.5M7 12.5V8.5M3 9L7.5 6.5" stroke="#fff" stroke-width="1"/></svg>
<svg style="left:177px;top:126px" width="9" height="10" viewBox="0 0 9 10"><path d="M1.5 0.6H7.5M2.5 0.6V5.5M6.5 0.6V5.5M0 5.6H9M4.5 5.6V10" stroke="#333333" stroke-width="1.2" fill="none"/></svg>
<svg style="left:209px;top:126px" width="9" height="9" viewBox="0 0 9 9"><path d="M0.5 0.5L8.5 8.5M8.5 0.5L0.5 8.5" stroke="#333333" stroke-width="1.1"/></svg>
<svg style="left:12px;top:151px" width="14" height="14" viewBox="0 0 14 14"><path d="M11.6 7.2 A5 5 0 1 1 7.6 2.3" stroke="#1a5fb4" stroke-width="2.2" fill="none"/><path d="M6.4 -0.6L11.8 2.5L6.4 5.6Z" fill="#1a5fb4"/></svg>
<svg style="left:43px;top:151px" width="16" height="15" viewBox="0 0 16 15"><path d="M1.5 1.5L14.5 13.5M14.5 1.5L1.5 13.5" stroke="#a0a0a4" stroke-width="2"/></svg>
<svg style="left:78px;top:152px" width="12" height="12" viewBox="0 0 12 12"><path d="M4.5 2.6V0.6H11.4V7.4H9.5M2.6 4.6V2.6H9.4V9.4H7.5" stroke="#333333" stroke-width="1.2" fill="none"/><rect x="0.6" y="4.6" width="6.8" height="6.8" fill="#fff" stroke="#333333" stroke-width="1.2"/><path d="M2.2 8H5.8" stroke="#1a5fb4" stroke-width="1.4"/></svg>
<svg style="left:112.5px;top:150.5px" width="7" height="7" viewBox="0 0 7 7"><path d="M3.5 0.5V6.5M0.5 3.5H6.5" stroke="#2e8b2e" stroke-width="2"/></svg>
<svg style="left:119px;top:151px" width="8" height="14" viewBox="0 0 8 14"><rect x="1" y="0" width="1.6" height="2.8" rx="0.6" fill="#333333"/><rect x="5" y="0" width="1.6" height="2.8" rx="0.6" fill="#333333"/><rect x="0.2" y="3.8" width="7.6" height="1.2" fill="#333333"/><rect x="1" y="4.8" width="5.7" height="4.2" fill="#333333"/><rect x="3" y="8.8" width="1.6" height="5.2" fill="#333333"/></svg>
<svg style="left:148px;top:151px" width="8" height="14" viewBox="0 0 8 14"><rect x="1" y="0" width="1.6" height="2.8" rx="0.6" fill="#a8a8ae"/><rect x="5" y="0" width="1.6" height="2.8" rx="0.6" fill="#a8a8ae"/><rect x="0.2" y="3.8" width="7.6" height="1.2" fill="#a8a8ae"/><rect x="1" y="4.8" width="5.7" height="4.2" fill="#a8a8ae"/><rect x="3" y="8.8" width="1.6" height="5.2" fill="#a8a8ae"/></svg>
<svg style="left:177px;top:151px" width="6" height="6" viewBox="0 0 6 6"><path d="M0.5 0.5L5.5 5.5M5.5 0.5L0.5 5.5" stroke="#c83232" stroke-width="1.2"/></svg>
<svg style="left:183px;top:151px" width="8" height="14" viewBox="0 0 8 14"><rect x="1" y="0" width="1.6" height="2.8" rx="0.6" fill="#333333"/><rect x="5" y="0" width="1.6" height="2.8" rx="0.6" fill="#333333"/><rect x="0.2" y="3.8" width="7.6" height="1.2" fill="#333333"/><rect x="1" y="4.8" width="5.7" height="4.2" fill="#333333"/><rect x="3" y="8.8" width="1.6" height="5.2" fill="#333333"/></svg>
<svg style="left:26px;top:179px" width="8" height="5" viewBox="0 0 8 5"><path d="M0.8 0.8L4 4L7.2 0.8" stroke="#1e7ad6" stroke-width="1.5" fill="none"/></svg>
<svg style="left:43px;top:173px" width="12" height="14" viewBox="0 0 12 14"><path d="M0 2.8 A6.0 2.8 0 0 1 12 2.8 V11.5 A6.0 2.5 0 0 1 0 11.5Z" fill="#3c3c3c"/><ellipse cx="6.0" cy="2.9" rx="4.4" ry="1.5" fill="#f4f4f4"/></svg>
<svg style="left:60px;top:175px" width="11" height="11" viewBox="0 0 11 11"><circle cx="5.5" cy="5.5" r="5.2" fill="#f25a42"/></svg>
<svg style="left:45px;top:195px" width="8" height="5" viewBox="0 0 8 5"><path d="M0.8 0.8L4 4L7.2 0.8" stroke="#1e7ad6" stroke-width="1.5" fill="none"/></svg>
<svg style="left:61px;top:189px" width="14" height="12" viewBox="0 0 14 12"><path d="M1.2 11.3V1.2H5.5L7 2.8H12.3V5.5" fill="#fff" stroke="#d6b274" stroke-width="1.3"/><path d="M0.6 11.5L3 5.5H13.8L11.5 11.5Z" fill="#dcb676"/></svg>
<svg style="left:65px;top:208px" width="5" height="8" viewBox="0 0 5 8"><path d="M0.8 0.8L4 4L0.8 7.2" stroke="#1e7ad6" stroke-width="1.5" fill="none"/></svg>
<svg style="left:81px;top:205px" width="13" height="12" viewBox="0 0 13 12"><path d="M0 1.5H5L6.5 3H13V12H0Z" fill="#e3c07f"/><path d="M0 4H13V12H0Z" fill="#dcb56c"/></svg>
<svg style="left:65px;top:224px" width="5" height="8" viewBox="0 0 5 8"><path d="M0.8 0.8L4 4L0.8 7.2" stroke="#1e7ad6" stroke-width="1.5" fill="none"/></svg>
<svg style="left:81px;top:222px" width="13" height="12" viewBox="0 0 13 12"><rect x="0.6" y="0.6" width="11.8" height="10.8" fill="#fff" stroke="#3a3a3a" stroke-width="1.2"/><rect x="0" y="0" width="13" height="3" fill="#3a3a3a"/><path d="M4.5 3V11.5M8.5 3V11.5M0.6 5.8H12.4M0.6 8.6H12.4" stroke="#3a3a3a" stroke-width="1"/></svg>
<svg style="left:65px;top:240px" width="5" height="8" viewBox="0 0 5 8"><path d="M0.8 0.8L4 4L0.8 7.2" stroke="#1e7ad6" stroke-width="1.5" fill="none"/></svg>
<svg style="left:81px;top:238px" width="13" height="12" viewBox="0 0 13 12"><rect x="0.6" y="0.6" width="11.8" height="10.8" fill="#fff" stroke="#3a3a3a" stroke-width="1.2"/><rect x="0" y="0" width="13" height="3" fill="#3a3a3a"/><path d="M4.5 3V11.5M8.5 3V11.5M0.6 5.8H12.4M0.6 8.6H12.4" stroke="#3a3a3a" stroke-width="1"/></svg>
<svg style="left:65px;top:256px" width="5" height="8" viewBox="0 0 5 8"><path d="M0.8 0.8L4 4L0.8 7.2" stroke="#1e7ad6" stroke-width="1.5" fill="none"/></svg>
<svg style="left:81px;top:254px" width="13" height="12" viewBox="0 0 13 12"><rect x="0.6" y="0.6" width="11.8" height="10.8" fill="#fff" stroke="#3a3a3a" stroke-width="1.2"/><rect x="0" y="0" width="13" height="3" fill="#3a3a3a"/><path d="M4.5 3V11.5M8.5 3V11.5M0.6 5.8H12.4M0.6 8.6H12.4" stroke="#3a3a3a" stroke-width="1"/></svg>
<svg style="left:65px;top:272px" width="5" height="8" viewBox="0 0 5 8"><path d="M0.8 0.8L4 4L0.8 7.2" stroke="#1e7ad6" stroke-width="1.5" fill="none"/></svg>
<svg style="left:81px;top:270px" width="13" height="12" viewBox="0 0 13 12"><rect x="0.6" y="0.6" width="11.8" height="10.8" fill="#fff" stroke="#3a3a3a" stroke-width="1.2"/><rect x="0" y="0" width="13" height="3" fill="#3a3a3a"/><path d="M4.5 3V11.5M8.5 3V11.5M0.6 5.8H12.4M0.6 8.6H12.4" stroke="#3a3a3a" stroke-width="1"/></svg>
<svg style="left:65px;top:288px" width="5" height="8" viewBox="0 0 5 8"><path d="M0.8 0.8L4 4L0.8 7.2" stroke="#1e7ad6" stroke-width="1.5" fill="none"/></svg>
<svg style="left:81px;top:286px" width="13" height="12" viewBox="0 0 13 12"><rect x="0.6" y="0.6" width="11.8" height="10.8" fill="#fff" stroke="#3a3a3a" stroke-width="1.2"/><rect x="0" y="0" width="13" height="3" fill="#3a3a3a"/><path d="M4.5 3V11.5M8.5 3V11.5M0.6 5.8H12.4M0.6 8.6H12.4" stroke="#3a3a3a" stroke-width="1"/></svg>
<svg style="left:65px;top:304px" width="5" height="8" viewBox="0 0 5 8"><path d="M0.8 0.8L4 4L0.8 7.2" stroke="#1e7ad6" stroke-width="1.5" fill="none"/></svg>
<svg style="left:81px;top:302px" width="13" height="12" viewBox="0 0 13 12"><rect x="0.6" y="0.6" width="11.8" height="10.8" fill="#fff" stroke="#3a3a3a" stroke-width="1.2"/><rect x="0" y="0" width="13" height="3" fill="#3a3a3a"/><path d="M4.5 3V11.5M8.5 3V11.5M0.6 5.8H12.4M0.6 8.6H12.4" stroke="#3a3a3a" stroke-width="1"/></svg>
<svg style="left:65px;top:320px" width="5" height="8" viewBox="0 0 5 8"><path d="M0.8 0.8L4 4L0.8 7.2" stroke="#1e7ad6" stroke-width="1.5" fill="none"/></svg>
<svg style="left:81px;top:318px" width="13" height="12" viewBox="0 0 13 12"><rect x="0.6" y="0.6" width="11.8" height="10.8" fill="#fff" stroke="#3a3a3a" stroke-width="1.2"/><rect x="0" y="0" width="13" height="3" fill="#3a3a3a"/><path d="M4.5 3V11.5M8.5 3V11.5M0.6 5.8H12.4M0.6 8.6H12.4" stroke="#3a3a3a" stroke-width="1"/></svg>
<svg style="left:65px;top:336px" width="5" height="8" viewBox="0 0 5 8"><path d="M0.8 0.8L4 4L0.8 7.2" stroke="#1e7ad6" stroke-width="1.5" fill="none"/></svg>
<svg style="left:81px;top:334px" width="13" height="12" viewBox="0 0 13 12"><rect x="0.6" y="0.6" width="11.8" height="10.8" fill="#fff" stroke="#3a3a3a" stroke-width="1.2"/><rect x="0" y="0" width="13" height="3" fill="#3a3a3a"/><path d="M4.5 3V11.5M8.5 3V11.5M0.6 5.8H12.4M0.6 8.6H12.4" stroke="#3a3a3a" stroke-width="1"/></svg>
<svg style="left:65px;top:352px" width="5" height="8" viewBox="0 0 5 8"><path d="M0.8 0.8L4 4L0.8 7.2" stroke="#1e7ad6" stroke-width="1.5" fill="none"/></svg>
<svg style="left:81px;top:350px" width="13" height="12" viewBox="0 0 13 12"><rect x="0.6" y="0.6" width="11.8" height="10.8" fill="#fff" stroke="#3a3a3a" stroke-width="1.2"/><rect x="0" y="0" width="13" height="3" fill="#3a3a3a"/><path d="M4.5 3V11.5M8.5 3V11.5M0.6 5.8H12.4M0.6 8.6H12.4" stroke="#3a3a3a" stroke-width="1"/></svg>
<svg style="left:65px;top:368px" width="5" height="8" viewBox="0 0 5 8"><path d="M0.8 0.8L4 4L0.8 7.2" stroke="#1e7ad6" stroke-width="1.5" fill="none"/></svg>
<svg style="left:81px;top:366px" width="13" height="12" viewBox="0 0 13 12"><rect x="0.6" y="0.6" width="11.8" height="10.8" fill="#fff" stroke="#3a3a3a" stroke-width="1.2"/><rect x="0" y="0" width="13" height="3" fill="#3a3a3a"/><path d="M4.5 3V11.5M8.5 3V11.5M0.6 5.8H12.4M0.6 8.6H12.4" stroke="#3a3a3a" stroke-width="1"/></svg>
<svg style="left:65px;top:384px" width="5" height="8" viewBox="0 0 5 8"><path d="M0.8 0.8L4 4L0.8 7.2" stroke="#1e7ad6" stroke-width="1.5" fill="none"/></svg>
<svg style="left:81px;top:382px" width="13" height="12" viewBox="0 0 13 12"><rect x="0.6" y="0.6" width="11.8" height="10.8" fill="#fff" stroke="#3a3a3a" stroke-width="1.2"/><rect x="0" y="0" width="13" height="3" fill="#3a3a3a"/><path d="M4.5 3V11.5M8.5 3V11.5M0.6 5.8H12.4M0.6 8.6H12.4" stroke="#3a3a3a" stroke-width="1"/></svg>
<svg style="left:65px;top:400px" width="5" height="8" viewBox="0 0 5 8"><path d="M0.8 0.8L4 4L0.8 7.2" stroke="#1e7ad6" stroke-width="1.5" fill="none"/></svg>
<svg style="left:81px;top:398px" width="13" height="12" viewBox="0 0 13 12"><rect x="0.6" y="0.6" width="11.8" height="10.8" fill="#fff" stroke="#3a3a3a" stroke-width="1.2"/><rect x="0" y="0" width="13" height="3" fill="#3a3a3a"/><path d="M4.5 3V11.5M8.5 3V11.5M0.6 5.8H12.4M0.6 8.6H12.4" stroke="#3a3a3a" stroke-width="1"/></svg>
<svg style="left:65px;top:416px" width="5" height="8" viewBox="0 0 5 8"><path d="M0.8 0.8L4 4L0.8 7.2" stroke="#1e7ad6" stroke-width="1.5" fill="none"/></svg>
<svg style="left:81px;top:414px" width="13" height="12" viewBox="0 0 13 12"><rect x="0.6" y="0.6" width="11.8" height="10.8" fill="#fff" stroke="#3a3a3a" stroke-width="1.2"/><rect x="0" y="0" width="13" height="3" fill="#3a3a3a"/><path d="M4.5 3V11.5M8.5 3V11.5M0.6 5.8H12.4M0.6 8.6H12.4" stroke="#3a3a3a" stroke-width="1"/></svg>
<svg style="left:216px;top:179px" width="7" height="4" viewBox="0 0 7 4"><path d="M0 4L3.5 0L7 4Z" fill="#777"/></svg>
<svg style="left:216px;top:418px" width="7" height="4" viewBox="0 0 7 4"><path d="M0 0L3.5 4L7 0Z" fill="#777"/></svg>
<svg style="left:10px;top:435px" width="4" height="7" viewBox="0 0 4 7"><path d="M4 0L0 3.5L4 7Z" fill="#777"/></svg>
<svg style="left:201px;top:435px" width="4" height="7" viewBox="0 0 4 7"><path d="M0 0L4 3.5L0 7Z" fill="#777"/></svg>
<svg style="left:243px;top:122px" width="14.0" height="13.0" viewBox="0 0 14 13"><rect x="3.5" y="2" width="6.5" height="8.5" fill="#f2f2f2"/><path d="M2.9 8.6V3.2Q2.9 1.1 5 1.1H12.8Q13.6 1.1 13.6 2.4" stroke="#333333" stroke-width="2" fill="none"/><path d="M10.4 1.5V11.2Q10.4 12.2 9.4 12.2H1" stroke="#333333" stroke-width="1.7" fill="none"/><path d="M0.2 10.6H7.2Q7.6 11.6 8.5 11.8" stroke="#333333" stroke-width="2.2" fill="none"/></svg>
<svg style="left:261px;top:124px" width="11" height="11" viewBox="0 0 11 11"><circle cx="5.5" cy="5.5" r="5.2" fill="#f25a42"/></svg>
<svg style="left:344px;top:125px" width="10" height="10" viewBox="0 0 10 10"><circle cx="5" cy="5" r="5" fill="#6e6e72"/><path d="M3 3L7 7M7 3L3 7" stroke="#e6e6ea" stroke-width="1.3"/></svg>
<svg style="left:978px;top:128px" width="6" height="3" viewBox="0 0 6 3"><path d="M0 0H6L3 3Z" fill="#444"/></svg>
<svg style="left:984px;top:147px" width="10" height="10" viewBox="0 0 10 10"><path d="M0 5H10" stroke="#333" stroke-width="1.6"/><path d="M3 2.5L5 0.5L7 2.5ZM3 7.5L5 9.5L7 7.5Z" fill="#333"/></svg>
<svg style="left:985px;top:166px" width="7" height="5" viewBox="0 0 7 5"><path d="M0 5L3.5 0L7 5Z" fill="#777"/></svg>
<svg style="left:985px;top:390px" width="7" height="5" viewBox="0 0 7 5"><path d="M0 0L3.5 5L7 0Z" fill="#777"/></svg>
<svg style="left:240px;top:405px" width="9" height="8" viewBox="0 0 9 8"><path d="M4.5 0V8" stroke="#333" stroke-width="1.6"/><path d="M0 4L2 2V6ZM9 4L7 2V6Z" fill="#333"/></svg>
<svg style="left:260px;top:406px" width="5" height="7" viewBox="0 0 5 7"><path d="M5 0L0 3.5L5 7Z" fill="#c8c8cc"/></svg>
<svg style="left:969px;top:406px" width="5" height="7" viewBox="0 0 5 7"><path d="M0 0L5 3.5L0 7Z" fill="#c8c8cc"/></svg>
<svg style="left:243px;top:424px" width="14.0" height="13.0" viewBox="0 0 14 13"><rect x="3.5" y="2" width="6.5" height="8.5" fill="#f2f2f2"/><path d="M2.9 8.6V3.2Q2.9 1.1 5 1.1H12.8Q13.6 1.1 13.6 2.4" stroke="#333333" stroke-width="2" fill="none"/><path d="M10.4 1.5V11.2Q10.4 12.2 9.4 12.2H1" stroke="#333333" stroke-width="1.7" fill="none"/><path d="M0.2 10.6H7.2Q7.6 11.6 8.5 11.8" stroke="#333333" stroke-width="2.2" fill="none"/></svg>
<svg style="left:312px;top:427px" width="10" height="10" viewBox="0 0 10 10"><path d="M5 0V10M0 5H10" stroke="#333333" stroke-width="1.8"/></svg>
<svg style="left:943px;top:425px" width="13" height="13" viewBox="0 0 13 13"><rect x="0.7" y="0.7" width="11.6" height="11.6" fill="#fff" stroke="#333333" stroke-width="1.4"/><rect x="0.7" y="6.5" width="11.6" height="5.8" fill="#333333"/></svg>
<svg style="left:975px;top:425px" width="13" height="13" viewBox="0 0 13 13"><rect x="0.7" y="0.7" width="11.6" height="11.6" fill="#fff" stroke="#333333" stroke-width="1.4"/></svg>
<div class="a" style="left:995px;top:467px;width:2px;height:2px;background:#c0c0c8;"></div>
<div class="a" style="left:992px;top:470px;width:2px;height:2px;background:#c0c0c8;"></div>
<div class="a" style="left:995px;top:470px;width:2px;height:2px;background:#c0c0c8;"></div>
<div class="a" style="left:989px;top:473px;width:2px;height:2px;background:#c0c0c8;"></div>
<div class="a" style="left:992px;top:473px;width:2px;height:2px;background:#c0c0c8;"></div>
<div class="a" style="left:995px;top:473px;width:2px;height:2px;background:#c0c0c8;"></div>
<div class="a" style="left:270px;top:234px;width:710px;height:15px;background:#e6e6fa;"></div>
<div class="a" style="left:284px;top:189px;width:696px;height:1px;background:#d0d0d0;"></div>
<div class="a" style="left:284px;top:189px;width:1px;height:15px;background:#d0d0d0;"></div>
<div class="a" style="left:270px;top:204px;width:15px;height:1px;background:#d0d0d0;"></div>
<div class="a" style="left:270px;top:204px;width:1px;height:46px;background:#d0d0d0;"></div>
<div class="a" style="left:270px;top:249px;width:710px;height:1px;background:#d0d0d0;"></div>
<div class="a" style="left:587px;top:234px;width:393px;height:1px;background:#d0d0d0;"></div>
<div class="a" style="left:587px;top:234px;width:1px;height:15px;background:#d0d0d0;"></div>
<div class="a" style="left:299px;top:204px;width:35px;height:15px;background:#e0e0e0;"></div>
<div class="a" style="left:460px;top:219px;width:35px;height:15px;background:#e0e0e0;"></div>
<div class="a" style="left:328px;top:234px;width:35px;height:15px;background:#d6d6de;"></div>
<div class="a" style="left:327px;top:234px;width:2px;height:15px;background:#000;"></div>
<div class="a" style="left:258px;top:147px;width:9px;height:9px;background:#fff;border:1px solid #c4c6d4"></div>
<div class="a" style="left:260px;top:151px;width:5px;height:1px;background:#c4c6d4;"></div>
<div class="a" style="left:262px;top:156px;width:1px;height:36px;background:#c4c6d4;"></div>
<div class="a" style="left:258px;top:192px;width:9px;height:9px;background:#fff;border:1px solid #c4c6d4"></div>
<div class="a" style="left:260px;top:196px;width:5px;height:1px;background:#c4c6d4;"></div>
<div class="a" style="left:262px;top:201px;width:1px;height:47px;background:#c4c6d4;"></div>
<div class="a" style="left:262px;top:248px;width:5px;height:1px;background:#c4c6d4;"></div>
<div class="code" style="left:271px;top:146px"><span class=kw>CREATE</span> <span class=gr>OR</span> <span class=kw>ALTER</span> <span class=kw>PROCEDURE</span> Person<span class=gr>.</span>EmailAddressID <span class=tl>@EmailAddress</span> <span class=br>VARCHAR</span><span class=gr>(</span>30<span class=gr>)</span> <span class=gr>=</span> <span class=rd>'%'</span>
<span class=kw>AS</span>
  <span class=kw>DECLARE</span> <span class=tl>@EmailAddressList</span> <span class=br>VARCHAR</span><span class=gr>(</span>30<span class=gr>)</span>
  <span class=kw>SELECT</span>
    email<span class=gr>.</span>EmailAddressID <span class=kw>AS</span> EmailID
  <span class=kw>FROM</span> Person<span class=gr>.</span>EmailAddress email
  <span class=kw>WHERE</span> email<span class=gr>.</span>EmailAddress <span class=gr>LIKE</span> <span class=tl>@EmailAddress</span><span class=gr>;</span>
<span class=kw>GO</span>
<span class=kw>EXECUTE</span> Person<span class=gr>.</span>EmailAddressID <span class=tl>@EmailAddress</span> <span class=gr>=</span> <span class=rd>'%Shawna%'</span>
<span class=kw>GO</span></div>
<div class="a" style="left:335px;top:245px;width:305px;height:535px;background:#cfd0dc;"></div>
<div class="a" style="left:336px;top:246px;width:303px;height:533px;background:#fff;"></div>
<div class="t " style="left:371.0px;top:254px;letter-spacing:-0.172px;">Insert Snippet...</div>
<div class="t" style="right:387px;top:254px;letter-spacing:-0.15px">Ctrl+K, X</div>
<div class="a" style="left:368px;top:276px;width:269px;height:1px;background:#d8d8e4;"></div>
<div class="t " style="left:371.0px;top:285px;letter-spacing:0.413px;">Cut</div>
<div class="t" style="right:387px;top:285px;letter-spacing:-0.15px">Ctrl+X</div>
<div class="t " style="left:371.0px;top:313px;letter-spacing:0.229px;">Copy</div>
<div class="t" style="right:387px;top:313px;letter-spacing:-0.15px">Ctrl+C</div>
<div class="t " style="left:371.0px;top:341px;letter-spacing:-0.496px;">Paste</div>
<div class="t" style="right:387px;top:341px;letter-spacing:-0.15px">Ctrl+V</div>
<div class="a" style="left:368px;top:363px;width:269px;height:1px;background:#d8d8e4;"></div>
<div class="t " style="left:371.0px;top:372px;letter-spacing:-0.327px;">Execute</div>
<div class="t" style="right:387px;top:372px;letter-spacing:-0.15px">F5</div>
<div class="t " style="left:371.0px;top:400px;letter-spacing:-0.057px;">Run On Multiple Targets...</div>
<div class="t " style="left:371.0px;top:428px;letter-spacing:-0.143px;">Execute Current Statement</div>
<div class="t" style="right:387px;top:428px;letter-spacing:-0.15px">F8</div>
<div class="t " style="left:371.0px;top:456px;letter-spacing:-0.232px;">Execute To Cursor</div>
<div class="t" style="right:387px;top:456px;letter-spacing:-0.15px">Ctrl+Shift+F10</div>
<div class="a" style="left:368px;top:478px;width:269px;height:1px;background:#d8d8e4;"></div>
<div class="t " style="left:371.0px;top:487px;letter-spacing:-0.36px;">Start</div>
<div class="t" style="right:387px;top:487px;letter-spacing:-0.15px">Alt+F5</div>
<div class="t " style="left:371.0px;top:515px;letter-spacing:-0.18px;">Run To Cursor</div>
<div class="t" style="right:387px;top:515px;letter-spacing:-0.15px">Ctrl+F10</div>
<div class="t " style="left:371.0px;top:543px;letter-spacing:-0.088px;">Insert Breakpoint</div>
<div class="a" style="left:368px;top:565px;width:269px;height:1px;background:#d8d8e4;"></div>
<div class="t " style="left:371.0px;top:574px;letter-spacing:0.048px;">Go To Definition</div>
<div class="t" style="right:387px;top:574px;letter-spacing:-0.15px">F12</div>
<div class="t " style="left:371.0px;top:602px;letter-spacing:-0.286px;">Jump Between Syntax Pairs</div>
<div class="t" style="right:387px;top:602px;letter-spacing:-0.15px">Ctrl+F12</div>
<div class="a" style="left:368px;top:624px;width:269px;height:1px;background:#d8d8e4;"></div>
<div class="t " style="left:371.0px;top:633px;letter-spacing:-0.044px;">Disable Code Completion</div>
<div class="a" style="left:368px;top:655px;width:269px;height:1px;background:#d8d8e4;"></div>
<div class="a" style="left:337px;top:657px;width:301px;height:28px;background:#c9ddf4;"></div>
<div class="t " style="left:371.0px;top:664px;letter-spacing:-0.087px;">Refactoring</div>
<svg style="left:623px;top:667px" width="5" height="8" viewBox="0 0 5 8"><path d="M0 0L5 4L0 8Z" fill="#222"/></svg>
<div class="a" style="left:368px;top:686px;width:269px;height:1px;background:#d8d8e4;"></div>
<div class="t " style="left:371.0px;top:695px;letter-spacing:-0.201px;">Analyze Code</div>
<div class="a" style="left:368px;top:717px;width:269px;height:1px;background:#d8d8e4;"></div>
<div class="t " style="left:371.0px;top:726px;letter-spacing:0.019px;">Format</div>
<svg style="left:623px;top:729px" width="5" height="8" viewBox="0 0 5 8"><path d="M0 0L5 4L0 8Z" fill="#222"/></svg>
<div class="a" style="left:368px;top:748px;width:269px;height:1px;background:#d8d8e4;"></div>
<div class="t " style="left:371.0px;top:757px;letter-spacing:-0.151px;">Settings</div>
<svg style="left:623px;top:760px" width="5" height="8" viewBox="0 0 5 8"><path d="M0 0L5 4L0 8Z" fill="#222"/></svg>
<div class="a" style="left:640px;top:657px;width:247px;height:88px;background:#cfd0dc;"></div>
<div class="a" style="left:641px;top:658px;width:245px;height:86px;background:#fff;"></div>
<div class="a" style="left:642px;top:659px;width:243px;height:28px;background:#c9ddf4;"></div>
<div class="t " style="left:676.0px;top:666px;letter-spacing:-0.382px;">Rename...</div>
<div class="t" style="right:140px;top:666px;letter-spacing:-0.15px">F2</div>
<div class="t " style="left:676.0px;top:694px;letter-spacing:-0.105px;">Insert Semicolons</div>
<div class="t" style="right:140px;top:694px;letter-spacing:-0.15px">Ctrl+K, ;</div>
<div class="t " style="left:676.0px;top:722px;letter-spacing:-0.285px;">Convert EXEC to Script</div>
<svg style="left:342px;top:253px" width="15" height="14" viewBox="0 0 15 14"><path d="M3.5 1V7M0.5 4H6.5" stroke="#2e8b2e" stroke-width="2"/><path d="M7.5 4.6H13.4V10.5" stroke="#333" stroke-width="1.2" fill="none"/><rect x="5" y="6" width="8" height="6" fill="#f0f0f0"/><path d="M5.6 6.5V10.5" stroke="#333" stroke-width="1.2"/><path d="M5.6 13.4H13.4" stroke="#333" stroke-width="1.2" stroke-dasharray="1 1"/></svg>
<svg style="left:344px;top:285px" width="12" height="14" viewBox="0 0 12 14"><path d="M2.5 0.5L7.2 9M9.5 0.5L4.8 9" stroke="#333333" stroke-width="1.3" fill="none"/><circle cx="2.7" cy="11.2" r="2" fill="none" stroke="#333333" stroke-width="1.2"/><circle cx="9.3" cy="11.2" r="2" fill="none" stroke="#333333" stroke-width="1.2"/></svg>
<svg style="left:344px;top:313px" width="12" height="14" viewBox="0 0 12 14"><path d="M4.5 0.6H11.4V10.4H9" stroke="#333333" stroke-width="1.2" fill="none"/><rect x="0.6" y="3.6" width="7.8" height="9.8" fill="#f0f0f0" stroke="#333333" stroke-width="1.2"/></svg>
<svg style="left:343px;top:341px" width="13" height="14" viewBox="0 0 13 14"><path d="M3.6 5.5V2.6H11.4V13.4H7" stroke="#333333" stroke-width="1.2" fill="#f0f0f0"/><path d="M5.5 2.6 Q7.5 -0.8 9.5 2.6Z" fill="none" stroke="#333333" stroke-width="1.1"/><rect x="0.6" y="7.6" width="5.8" height="5.8" fill="#fff" stroke="#333333" stroke-width="1.2"/></svg>
<svg style="left:348px;top:374px" width="3" height="10" viewBox="0 0 3 10"><rect x="0.2" y="0" width="2.6" height="7" fill="#a01010"/><rect x="0.2" y="8" width="2.6" height="2" fill="#a01010"/></svg>
<svg style="left:344px;top:401px" width="14.0" height="13.0" viewBox="0 0 14 13"><rect x="3.5" y="2" width="6.5" height="8.5" fill="#f2f2f2"/><path d="M2.9 8.6V3.2Q2.9 1.1 5 1.1H12.8Q13.6 1.1 13.6 2.4" stroke="#333333" stroke-width="2" fill="none"/><path d="M10.4 1.5V11.2Q10.4 12.2 9.4 12.2H1" stroke="#333333" stroke-width="1.7" fill="none"/><path d="M0.2 10.6H7.2Q7.6 11.6 8.5 11.8" stroke="#333333" stroke-width="2.2" fill="none"/></svg>
<svg style="left:343px;top:400px" width="6" height="7" viewBox="0 0 6 7"><path d="M0 0L6 3.5L0 7Z" fill="#2e9a3e"/></svg>
<svg style="left:344px;top:430px" width="7" height="9" viewBox="0 0 7 9"><path d="M0.5 1.5H6M1.5 4.5H6M0.5 7.5H6" stroke="#333" stroke-width="1"/></svg>
<svg style="left:352px;top:429px" width="3" height="11" viewBox="0 0 3 11"><rect x="0.2" y="0" width="2.6" height="8" fill="#c01818"/><rect x="0.2" y="9" width="2.6" height="2" fill="#c01818"/></svg>
<svg style="left:346px;top:488px" width="9" height="12" viewBox="0 0 9 12"><path d="M0 0L9 6L0 12Z" fill="#3a9a3a"/></svg>
<svg style="left:347px;top:516px" width="9" height="12" viewBox="0 0 9 12"><path d="M0.5 0.5V10.5L3 8.3L5 12L6.8 11.2L5 7.5H8.5Z" fill="#404040"/></svg>
<svg style="left:344px;top:544px" width="12" height="12" viewBox="0 0 12 12"><circle cx="6" cy="6" r="6" fill="#e5150a"/></svg>
<svg style="left:343px;top:574px" width="11" height="14" viewBox="0 0 11 14"><path d="M0 2.6H5.5" stroke="#1a5fb4" stroke-width="1.8"/><path d="M4.5 0L7.5 2.6L4.5 5.2Z" fill="#1a5fb4"/><rect x="4" y="6.5" width="7" height="7" fill="#444"/></svg>
<svg style="left:340px;top:630px" width="20" height="20" viewBox="0 0 20 20"><rect x="0.75" y="0.75" width="18.5" height="18.5" fill="#fff" stroke="#2a7bd4" stroke-width="1.5"/><path d="M7 5L9 7.5L12.5 2.5" stroke="#333" stroke-width="1.2" fill="none"/><text x="10" y="16" font-family="Liberation Sans" font-size="8" fill="#333" text-anchor="middle">SQL</text></svg>
<svg style="left:342px;top:696px" width="16" height="13" viewBox="0 0 16 13"><path d="M5 1H15M6.5 4H13M8 7H13M9 10H11" stroke="#333" stroke-width="1.5"/><path d="M4 4.5L7.8 8.3L4 12L0.2 8.3Z" fill="#1e88e5"/><path d="M4 6.2V8.8M4 9.8V10.6" stroke="#fff" stroke-width="1"/></svg>
<svg style="left:648px;top:667px" width="15" height="12" viewBox="0 0 15 12"><rect x="0.7" y="3.2" width="9.3" height="5.6" fill="#fff" stroke="#333" stroke-width="1.4"/><rect x="2.5" y="5" width="5" height="2" fill="#999"/><path d="M9 0.6H12M10.5 0.6V11.4M9 11.4H12M12 3.2H13.5V8.8H12" stroke="#333" stroke-width="1.2" fill="none"/></svg>
<svg style="left:778px;top:674px" width="13" height="20" viewBox="0 0 13 20"><path d="M0.5 0.5V16.5L4.3 12.8L6.8 18.6L9.3 17.5L6.8 11.8H12Z" fill="#fff" stroke="#555" stroke-width="1"/></svg>
</body></html>
